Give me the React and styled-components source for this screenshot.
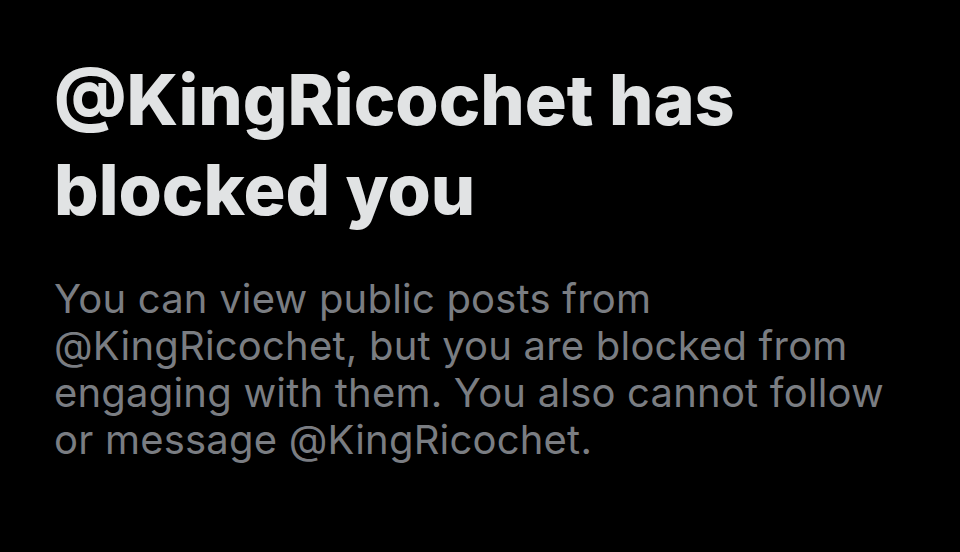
import React from "react";
import styled, { createGlobalStyle } from "styled-components";

const Global = createGlobalStyle`
  html, body { margin: 0; padding: 0; background: #000; }
  body { width: 960px; height: 552px; overflow: hidden; }
`;

const Page = styled.main`
  box-sizing: border-box;
  width: 960px;
  height: 552px;
  background: #000;
  padding: 55px 40px 0 54px;
  display: flex;
  flex-direction: column;
  gap: 40px;
  font-family: Inter, "Liberation Sans", sans-serif;
`;

const Title = styled.h1`
  margin: 0;
  color: #e1e3e4;
  font-size: 70px;
  font-weight: 800;
  line-height: 90px;
  letter-spacing: 0;
`;

const Body = styled.p`
  margin: 0;
  color: #7a7d82;
  font-size: 40px;
  font-weight: 400;
  line-height: 47px;
  letter-spacing: 0.2px;
`;

export default function App() {
  return (
    <>
      <Global />
      <Page>
        <Title>
          @KingRicochet has
          <br />
          blocked you
        </Title>
        <Body>
          You can view public posts from
          <br />
          @KingRicochet, but you are blocked from
          <br />
          engaging with them. You also cannot follow
          <br />
          or message @KingRicochet.
        </Body>
      </Page>
    </>
  );
}
